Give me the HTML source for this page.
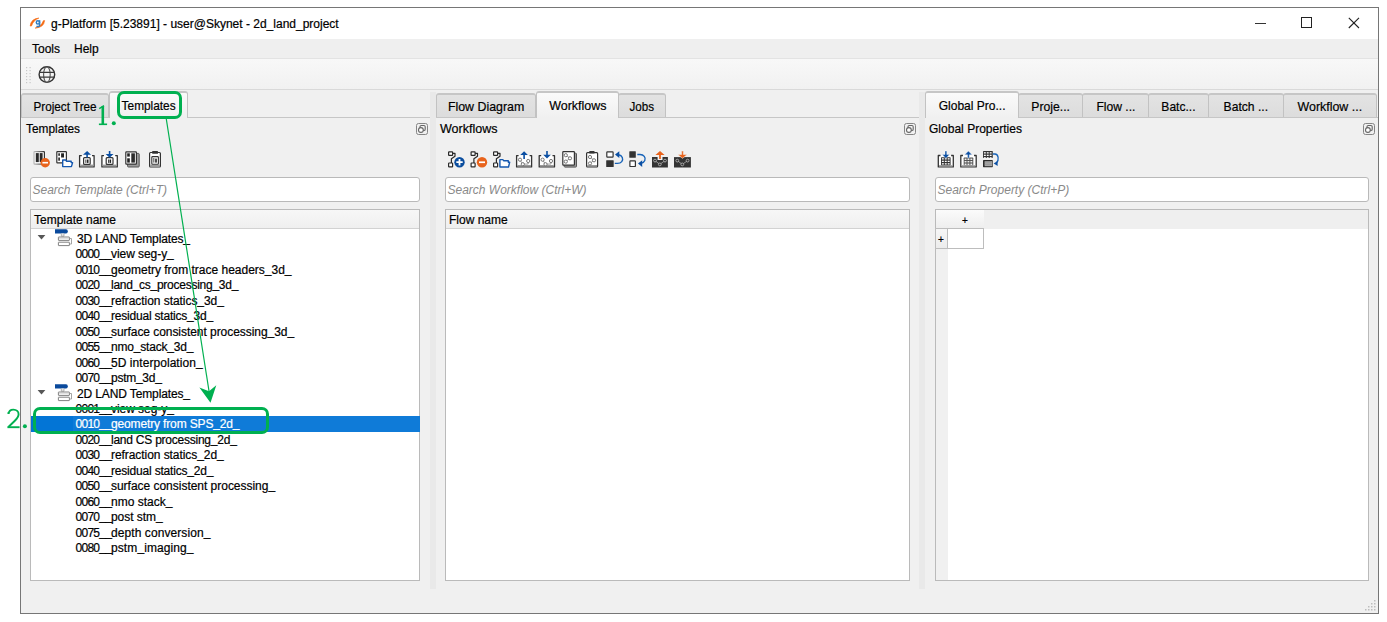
<!DOCTYPE html>
<html><head><meta charset="utf-8">
<style>
html,body{margin:0;padding:0;background:#fff;width:1387px;height:622px;overflow:hidden;}
*{box-sizing:border-box;}
body{font-family:"Liberation Sans",sans-serif;font-size:12px;color:#000;position:relative;-webkit-text-stroke:0.2px currentColor;}
.a{position:absolute;}
.t{position:absolute;white-space:nowrap;line-height:14px;}
#win{left:20px;top:7px;width:1359px;height:607px;border:1px solid #767676;background:#f0f0f0;}
#title{left:21px;top:8px;width:1357px;height:31px;background:#fff;}
#menu{left:21px;top:39px;width:1357px;height:20px;background:#efefef;border-bottom:1px solid #e3e3e3;}
#tool{left:21px;top:59px;width:1357px;height:31px;background:linear-gradient(#f8f8f8,#f1f1f1);border-bottom:1px solid #d9d9d9;}
.tab{position:absolute;top:93px;height:25px;border:1px solid #c2c2c2;border-top:2px solid #c6c6c6;border-bottom:none;border-radius:3px 3px 0 0;background:linear-gradient(#e3e3e3,#dcdcdc);text-align:center;line-height:23px;font-size:13px;}
.tl{display:inline-block;white-space:nowrap;}
.tab.sel{top:91px;height:27px;background:linear-gradient(#fafafa,#f0f0f0);border-color:#c2c2c2;border-top-color:#c6c6c6;line-height:25px;z-index:2;}
.tbline{position:absolute;top:117px;height:1px;background:#c6c6c6;z-index:1;}
.split{position:absolute;top:92px;height:497px;width:6px;background:#e9e9e9;}
.float{position:absolute;width:12px;height:12px;}
.search{position:absolute;height:25px;background:#fff;border:1px solid #b9b9b9;border-radius:3px;}
.search span{position:absolute;left:1.5px;top:5px;font-style:italic;color:#8a8a8a;-webkit-text-stroke:0;white-space:nowrap;line-height:14px;}
.tree{position:absolute;background:#fff;border:1px solid #bababa;}
.hdr{position:absolute;left:0;top:0;right:0;height:19px;background:linear-gradient(#f7f7f7,#efefef);border-bottom:1px solid #d2d2d2;}
.u{position:relative;top:-1px;}
.row{position:absolute;left:75px;white-space:nowrap;line-height:15px;}
</style></head><body>
<div id="win" class="a"></div>
<div id="title" class="a"></div>
<div class="t" style="left:51px;top:17px;">g-Platform [5.23891] - user@Skynet - 2d_land_project</div>
<div id="menu" class="a"></div>
<div class="t" style="left:32px;top:42px;">Tools</div>
<div class="t" style="left:74px;top:42px;">Help</div>
<div id="tool" class="a"></div>

<!-- left dock -->
<div class="tbline" style="left:21px;width:409px;"></div>
<div class="tab" style="left:21px;width:88px;"><span class="tl" style="transform:scaleX(0.901)">Project Tree</span></div>
<div class="tab sel" style="left:109px;width:79px;"><span class="tl" style="transform:scaleX(0.912)">Templates</span></div>
<div class="t" style="left:25.5px;top:121.5px;font-size:13px;transform:scaleX(0.912);transform-origin:0 0;">Templates</div>
<div class="float" style="left:417px;top:123px;"><svg width="12" height="12" viewBox="0 0 12 12" style="position:absolute;left:-1px;top:0px"><rect x="0.5" y="0.5" width="11" height="11" rx="2" fill="#f0f0f0" stroke="#858585"/><rect x="4" y="2.5" width="5.2" height="5" rx="1.3" fill="none" stroke="#666" stroke-width="1.1"/><circle cx="4.9" cy="7" r="2.4" fill="#fff" stroke="#666" stroke-width="1.1"/></svg></div>
<div class="search" style="left:30px;top:177px;width:390px;"><span>Search Template (Ctrl+T)</span></div>
<div class="tree" style="left:30px;top:209px;width:390px;height:372px;">
  <div class="hdr"><span class="t" style="left:3px;top:3px;">Template name</span></div>
</div>

<div class="split" style="left:430px;"></div>

<!-- middle dock -->
<div class="tbline" style="left:436px;width:483px;"></div>
<div class="tab" style="left:436px;width:100px;"><span class="tl" style="transform:scaleX(0.953)">Flow Diagram</span></div>
<div class="tab sel" style="left:536px;width:83px;"><span class="tl" style="transform:scaleX(0.961)">Workflows</span></div>
<div class="tab" style="left:618px;width:48px;"><span class="tl" style="transform:scaleX(0.893)">Jobs</span></div>
<div class="t" style="left:439.5px;top:121.5px;font-size:13px;transform:scaleX(0.964);transform-origin:0 0;">Workflows</div>
<div class="float" style="left:905px;top:123px;"><svg width="12" height="12" viewBox="0 0 12 12" style="position:absolute;left:-1px;top:0px"><rect x="0.5" y="0.5" width="11" height="11" rx="2" fill="#f0f0f0" stroke="#858585"/><rect x="4" y="2.5" width="5.2" height="5" rx="1.3" fill="none" stroke="#666" stroke-width="1.1"/><circle cx="4.9" cy="7" r="2.4" fill="#fff" stroke="#666" stroke-width="1.1"/></svg></div>
<div class="search" style="left:445px;top:177px;width:465px;"><span>Search Workflow (Ctrl+W)</span></div>
<div class="tree" style="left:445px;top:209px;width:465px;height:372px;">
  <div class="hdr"><span class="t" style="left:3px;top:3px;">Flow name</span></div>
</div>

<div class="split" style="left:919px;"></div>

<!-- right dock -->
<div class="tbline" style="left:925px;width:453px;"></div>
<div class="tab sel" style="left:925px;width:94px;"><span class="tl" style="transform:scaleX(0.924)">Global Pro...</span></div>
<div class="tab" style="left:1018px;width:65px;"><span class="tl" style="transform:scaleX(0.938)">Proje...</span></div>
<div class="tab" style="left:1082px;width:67px;"><span class="tl" style="transform:scaleX(0.93)">Flow ...</span></div>
<div class="tab" style="left:1148px;width:61px;"><span class="tl" style="transform:scaleX(0.926)">Batc...</span></div>
<div class="tab" style="left:1208px;width:76px;"><span class="tl" style="transform:scaleX(0.933)">Batch ...</span></div>
<div class="tab" style="left:1283px;width:94px;"><span class="tl" style="transform:scaleX(0.955)">Workflow ...</span></div>
<div class="t" style="left:929px;top:121.5px;font-size:13px;transform:scaleX(0.926);transform-origin:0 0;">Global Properties</div>
<div class="float" style="left:1364px;top:123px;"><svg width="12" height="12" viewBox="0 0 12 12" style="position:absolute;left:-1px;top:0px"><rect x="0.5" y="0.5" width="11" height="11" rx="2" fill="#f0f0f0" stroke="#858585"/><rect x="4" y="2.5" width="5.2" height="5" rx="1.3" fill="none" stroke="#666" stroke-width="1.1"/><circle cx="4.9" cy="7" r="2.4" fill="#fff" stroke="#666" stroke-width="1.1"/></svg></div>
<div class="search" style="left:935px;top:177px;width:434px;"><span>Search Property (Ctrl+P)</span></div>
<div class="tree" style="left:935px;top:209px;width:434px;height:372px;">
</div>
<div class="a" style="left:936px;top:210px;width:432px;height:19px;background:#efefef"></div>
<div class="a" style="left:936px;top:210px;width:48px;height:19px;background:linear-gradient(#fbfbfb,#ededed)"></div>
<div class="a" style="left:936px;top:229px;width:12px;height:351px;background:#f0f0f0"></div>
<div class="a" style="left:935px;top:228px;width:13px;height:21px;border:1px solid #bdbdbd;background:linear-gradient(#f6f6f6,#ececec)"></div>
<div class="a" style="left:947px;top:228px;width:37px;height:21px;border:1px solid #bdbdbd;background:#fff"></div>
<div class="t" style="left:962px;top:214px;font-size:10px;">+</div>
<div class="t" style="left:938px;top:233px;font-size:10px;">+</div>


<!-- title icon -->
<svg class="a" style="left:26px;top:14.5px" width="22" height="18" viewBox="0 0 22 18">
 <path d="M4.2 11 Q5 3.8 12.8 3.1 Q7.6 5 5.4 11 Z" fill="#f56a12" stroke="#f56a12" stroke-width="0.7" stroke-linejoin="round"/>
 <path d="M18.6 5.6 Q17.8 12.6 9.2 13.1 Q15.4 11.4 17.4 5.7 Z" fill="#f56a12" stroke="#f56a12" stroke-width="0.7" stroke-linejoin="round"/>
 <circle cx="11.9" cy="7.4" r="1.6" fill="none" stroke="#2f7dc2" stroke-width="1.5"/>
 <path d="M13.6 5.3 V10.3 Q13.6 11.6 12 11.6 H10.4" fill="none" stroke="#2f7dc2" stroke-width="1.5"/>
</svg>
<!-- title buttons -->
<div class="a" style="left:1255px;top:22.5px;width:11px;height:1.4px;background:#333"></div>
<div class="a" style="left:1301px;top:17px;width:11px;height:11px;border:1px solid #222"></div>
<svg class="a" style="left:1348px;top:17px" width="12" height="12" viewBox="0 0 12 12"><path d="M0.8 0.8 L11 11 M11 0.8 L0.8 11" stroke="#222" stroke-width="1.1"/></svg>
<!-- toolbar grip & globe -->
<svg class="a" style="left:25px;top:66px" width="8" height="18" viewBox="0 0 8 18">
 <g fill="#c8c8c8"><rect x="1" y="1" width="1.2" height="1.2"/><rect x="4.5" y="1" width="1.2" height="1.2"/>
 <rect x="1" y="4" width="1.2" height="1.2"/><rect x="4.5" y="4" width="1.2" height="1.2"/>
 <rect x="1" y="7" width="1.2" height="1.2"/><rect x="4.5" y="7" width="1.2" height="1.2"/>
 <rect x="1" y="10" width="1.2" height="1.2"/><rect x="4.5" y="10" width="1.2" height="1.2"/>
 <rect x="1" y="13" width="1.2" height="1.2"/><rect x="4.5" y="13" width="1.2" height="1.2"/>
 <rect x="1" y="16" width="1.2" height="1.2"/><rect x="4.5" y="16" width="1.2" height="1.2"/></g>
</svg>
<svg class="a" style="left:37px;top:65px" width="20" height="20" viewBox="0 0 20 20">
 <circle cx="9.9" cy="9.6" r="7.8" stroke="#333" stroke-width="1.4" fill="none"/>
 <ellipse cx="9.9" cy="9.6" rx="3.3" ry="7.8" stroke="#555" stroke-width="1.1" fill="none"/>
 <path d="M2.3 7.4 H17.5 M2.3 12.2 H17.5" stroke="#3a3a3a" stroke-width="1.2"/>
</svg>
<svg width="0" height="0" style="position:absolute">
 <defs>
  <symbol id="io" viewBox="0 0 6 6"><rect x="0.5" y="0.5" width="5" height="5" fill="#fff" stroke="#333" stroke-width="1"/><rect x="1.7" y="2.2" width="1" height="2.5" fill="#333"/><rect x="3.3" y="2.2" width="1.2" height="2.5" fill="#333"/></symbol>
  <symbol id="tray" viewBox="0 0 17 13"><path d="M2.5 1 H1 V12 H16 V1 H14.5" fill="none" stroke="#3c3c3c" stroke-width="1.3"/><rect x="1" y="10.6" width="15" height="1.6" fill="#777"/></symbol>
  <symbol id="flow" viewBox="0 0 12 17"><g fill="#fff" stroke="#333" stroke-width="1.3"><rect x="0.8" y="0.8" width="4.8" height="4.2"/><rect x="0.8" y="11.5" width="4.8" height="4.8"/></g><path d="M5.6 3 H7.5 V6.5 L3.2 11.5" fill="none" stroke="#333" stroke-width="1.1"/></symbol>
  <symbol id="graph" viewBox="0 0 10 10"><g fill="#fff" stroke="#555" stroke-width="0.9"><circle cx="2.3" cy="2.5" r="1.7"/><circle cx="7.5" cy="5" r="1.7"/><circle cx="2.3" cy="7.6" r="1.7"/></g></symbol>
  <symbol id="grid" viewBox="0 0 10 7"><rect x="0" y="0" width="10" height="7" rx="0.6" fill="#333"/><g fill="#fff"><rect x="1" y="1" width="2.2" height="1.2"/><rect x="4" y="1" width="2.2" height="1.2"/><rect x="7" y="1" width="2.2" height="1.2"/><rect x="1" y="3" width="2.2" height="1.2"/><rect x="4" y="3" width="2.2" height="1.2"/><rect x="7" y="3" width="2.2" height="1.2"/><rect x="1" y="5" width="2.2" height="1.2"/><rect x="4" y="5" width="2.2" height="1.2"/><rect x="7" y="5" width="2.2" height="1.2"/></g></symbol>
 </defs>
</svg>
<!-- LEFT panel icons -->
<svg class="a" style="left:0;top:0" width="200" height="175" viewBox="0 0 200 175">
 <defs><linearGradient id="lg1" x1="0" x2="1"><stop offset="0" stop-color="#bbb"/><stop offset="1" stop-color="#333"/></linearGradient></defs>
 <!-- 1 -->
 <rect x="34" y="151.6" width="10.4" height="12.5" fill="#fff" stroke="url(#lg1)" stroke-width="1.2" rx="0.6"/>
 <rect x="35.8" y="153.1" width="3" height="9" fill="#2a2a2a"/><rect x="39.7" y="153.1" width="2.9" height="9" fill="#2a2a2a"/>
 <circle cx="45.2" cy="162.7" r="4.7" fill="#e8631c"/><rect x="42.4" y="161.9" width="5.6" height="1.6" fill="#fff"/>
 <!-- 2 -->
 <rect x="56.8" y="151.6" width="9.6" height="11.3" fill="#fff" stroke="#333" stroke-width="1.2" rx="0.6"/>
 <rect x="58.3" y="153.3" width="1.6" height="2.5" fill="#222"/><rect x="58.3" y="157.5" width="1.6" height="3.2" fill="#222"/><rect x="61.1" y="153.3" width="2.9" height="4.2" fill="#222"/>
 <path d="M62.7 166.6 V160 H65.6 L66.6 161.2 H71.2 V162.6 H72.6 L71.4 166.6 Z" fill="#fff" stroke="#1558b0" stroke-width="1.4" stroke-linejoin="round"/>
 <!-- 3 export -->
 <rect x="79.6" y="155.5" width="14.5" height="11.8" fill="#fff"/>
 <path d="M81.8 155.6 H79.6 V166.9 H94.1 V155.6 H92" fill="none" stroke="#333" stroke-width="1.3" stroke-linejoin="round"/>
 <rect x="80.3" y="164.6" width="13.2" height="1.8" fill="#9a9a9a"/>
 <rect x="83.6" y="157.7" width="6.6" height="6.6" rx="0.9" fill="#fff" stroke="#333" stroke-width="1.2"/>
 <rect x="85.4" y="159.5" width="0.9" height="3.4" fill="#333"/><rect x="86.9" y="159.5" width="1.6" height="3.4" fill="#222"/>
 <path d="M87.1 151 L83 154.8 H86.3 V157.6 H87.9 V154.8 H91 Z" fill="#0b4fa3"/>
 <!-- 4 import -->
 <rect x="101.9" y="155.5" width="15.4" height="11.8" fill="#fff"/>
 <path d="M104 155.6 H101.9 V166.9 H117.3 V155.6 H115.2" fill="none" stroke="#333" stroke-width="1.3" stroke-linejoin="round"/>
 <rect x="102.6" y="164.6" width="14" height="1.8" fill="#9a9a9a"/>
 <rect x="106.2" y="157.7" width="6.8" height="6.6" rx="0.9" fill="#fff" stroke="#333" stroke-width="1.2"/>
 <rect x="108" y="159.5" width="0.9" height="3.4" fill="#333"/><rect x="109.5" y="159.5" width="1.6" height="3.4" fill="#222"/>
 <path d="M109.6 157.8 L105.7 154 H108.8 V151 H110.4 V154 H113.5 Z" fill="#0b4fa3"/>
 <!-- 5 copy -->
 <rect x="127.6" y="153.4" width="11.6" height="13.6" rx="0.8" fill="#9c9c9c" stroke="#555" stroke-width="1"/>
 <rect x="125.8" y="151.8" width="10.6" height="12.3" rx="0.6" fill="#fff" stroke="#333" stroke-width="1.2"/>
 <rect x="127.2" y="153.3" width="2.6" height="3.3" fill="#222"/><rect x="127.2" y="158.3" width="2.6" height="4.3" fill="#222"/><rect x="131.3" y="153.3" width="3.6" height="9.3" fill="#2b2b2b"/>
 <!-- 6 clipboard -->
 <rect x="149.6" y="152.5" width="10.8" height="14.5" rx="0.9" fill="#fff" stroke="#333" stroke-width="1.2"/>
 <rect x="150.2" y="164.6" width="9.6" height="2" fill="#9a9a9a"/>
 <rect x="152.2" y="151" width="5.8" height="2.8" rx="0.5" fill="#333"/>
 <rect x="151.8" y="156.6" width="6.6" height="7.6" rx="0.8" fill="#fff" stroke="#333" stroke-width="1.1"/>
 <rect x="153.4" y="158" width="0.9" height="4.6" fill="#333"/><rect x="155.2" y="158.6" width="1.6" height="4" fill="#222"/>
</svg>
<!-- MIDDLE panel icons -->
<svg class="a" style="left:0;top:0" width="700" height="175" viewBox="0 0 700 175">
 <!-- M1 -->
 <g fill="#fff" stroke="#2a2a2a" stroke-width="1.2"><rect x="448.6" y="151.8" width="4" height="3.6" rx="0.5"/><rect x="448.6" y="163" width="4" height="3.9" rx="0.5"/></g>
 <path d="M452.6 153.4 H455 V156.3 L451.4 158.7 V163" fill="none" stroke="#2a2a2a" stroke-width="1.2" stroke-linejoin="round"/>
 <circle cx="459.5" cy="162.2" r="5.2" fill="#0a4d9e"/><path d="M459.5 159 V165.4 M456.3 162.2 H462.7" stroke="#fff" stroke-width="1.8"/>
 <!-- M2 -->
 <g fill="#fff" stroke="#2a2a2a" stroke-width="1.2"><rect x="471.1" y="151.8" width="4" height="3.6" rx="0.5"/><rect x="471.1" y="163" width="4" height="3.9" rx="0.5"/></g>
 <path d="M475.1 153.4 H477.5 V156.3 L473.9 158.7 V163" fill="none" stroke="#2a2a2a" stroke-width="1.2" stroke-linejoin="round"/>
 <circle cx="482" cy="162.2" r="5.2" fill="#e8631c"/><rect x="479" y="161.4" width="6" height="1.7" fill="#fff"/>
 <!-- M3 -->
 <g fill="#fff" stroke="#2a2a2a" stroke-width="1.2"><rect x="493.6" y="151.8" width="4" height="3.6" rx="0.5"/><rect x="493.6" y="163" width="4" height="3.9" rx="0.5"/></g>
 <path d="M497.6 153.4 H500 V156.3 L496.4 158.7 V163" fill="none" stroke="#2a2a2a" stroke-width="1.2" stroke-linejoin="round"/>
 <path d="M499.9 167 V159.6 H502.8 L503.8 160.8 H508.3 V162.2 H509.7 L508.5 167 Z" fill="#fff" stroke="#1558b0" stroke-width="1.4" stroke-linejoin="round"/>
 <!-- M4 -->
 <rect x="516.6" y="155.5" width="15" height="11.8" fill="#fff"/>
 <path d="M518.6 155.6 H516.6 V166.9 H531.6 V155.6 H529.6" fill="none" stroke="#333" stroke-width="1.3" stroke-linejoin="round"/>
 <rect x="517.3" y="165" width="13.6" height="1.5" fill="#999"/>
 <path d="M520 160 L522.8 164.2 L528.2 164 V161" fill="none" stroke="#888" stroke-width="0.8"/>
 <g fill="#fff" stroke="#6a6a6a" stroke-width="0.9"><circle cx="520" cy="159.7" r="1.6"/><circle cx="522.8" cy="164.2" r="1.6"/><circle cx="528.2" cy="161" r="1.6"/></g>
 <path d="M524.1 151.2 L520.3 155 H523.3 V159.1 H524.9 V155 H527.9 Z" fill="#0b4fa3"/>
 <!-- M5 -->
 <rect x="539.2" y="155.5" width="15.3" height="11.8" fill="#fff"/>
 <path d="M541.2 155.6 H539.2 V166.9 H554.5 V155.6 H552.5" fill="none" stroke="#333" stroke-width="1.3" stroke-linejoin="round"/>
 <rect x="539.9" y="165" width="13.9" height="1.5" fill="#999"/>
 <path d="M542.6 160 L545.5 164.2 L551 164 V161" fill="none" stroke="#888" stroke-width="0.8"/>
 <g fill="#fff" stroke="#6a6a6a" stroke-width="0.9"><circle cx="542.6" cy="159.7" r="1.6"/><circle cx="545.5" cy="164.2" r="1.6"/><circle cx="551" cy="161" r="1.6"/></g>
 <path d="M547 158.6 L543.2 154.8 H546.2 V151 H547.8 V154.8 H550.8 Z" fill="#0b4fa3"/>
 <!-- M6 -->
 <rect x="564.2" y="153.2" width="12.3" height="13.9" rx="0.8" fill="#9c9c9c" stroke="#555" stroke-width="1"/>
 <rect x="562.8" y="151.6" width="11.6" height="13.6" rx="0.6" fill="#fff" stroke="#333" stroke-width="1.2"/>
 <path d="M565.8 155 L570 158.3 L565.8 161.6" fill="none" stroke="#888" stroke-width="0.8"/>
 <g fill="#fff" stroke="#6a6a6a" stroke-width="0.9"><circle cx="565.8" cy="155.2" r="1.6"/><circle cx="570" cy="158.3" r="1.6"/><circle cx="565.8" cy="161.6" r="1.6"/></g>
 <!-- M7 -->
 <rect x="586.6" y="152.6" width="11" height="14.3" rx="0.9" fill="#fff" stroke="#333" stroke-width="1.2"/>
 <rect x="587.2" y="165" width="9.8" height="1.6" fill="#9a9a9a"/>
 <rect x="589.3" y="151" width="5.2" height="2.6" rx="0.5" fill="#333"/>
 <path d="M590 157 L594 160.3 L590 163.4" fill="none" stroke="#888" stroke-width="0.8"/>
 <g fill="#fff" stroke="#6a6a6a" stroke-width="0.9"><circle cx="590" cy="157" r="1.6"/><circle cx="594" cy="160.3" r="1.6"/><circle cx="590" cy="163.4" r="1.6"/></g>
 <!-- M8 -->
 <rect x="606.8" y="151.8" width="6.3" height="5.4" rx="0.6" fill="#fff" stroke="#333" stroke-width="1.2"/>
 <rect x="606.2" y="160.3" width="7.5" height="6.8" rx="0.5" fill="#333"/>
 <path d="M614.8 163.4 H617.5 C621.3 163.4 623.5 160.5 622.3 157.5 C621.6 155.8 620.3 155 618.5 154.7" fill="none" stroke="#1763b8" stroke-width="1.4"/>
 <path d="M615 154.5 L619.3 151.2 L619.3 157.9 Z" fill="#0b4fa3"/>
 <!-- M9 -->
 <rect x="629.3" y="151.2" width="6.5" height="6.5" rx="0.5" fill="#333"/>
 <rect x="629.9" y="160.9" width="5.5" height="5.6" rx="0.6" fill="#fff" stroke="#333" stroke-width="1.2"/>
 <path d="M637.3 154.5 H640 C643.8 154.5 646 157.4 644.8 160.4 C644.1 162.1 642.8 162.9 641 163.2" fill="none" stroke="#1763b8" stroke-width="1.4"/>
 <path d="M638 163.6 L642.2 160.3 L642.2 167 Z" fill="#0b4fa3"/>
 <!-- M10 -->
 <path d="M652 157.1 H657.6 V160 H662.5 V157.1 H667.9 V167.5 H652 Z" fill="#333"/>
 <path d="M655 160.6 L659.8 164.4 L665 160.6" fill="none" stroke="#aaa" stroke-width="0.8"/>
 <g fill="#333" stroke="#bbb" stroke-width="0.8"><circle cx="655" cy="160.6" r="1.4"/><circle cx="659.8" cy="164.4" r="1.4"/><circle cx="665" cy="160.6" r="1.4"/></g>
 <path d="M660 150.9 L655.4 155.1 H659.1 V159 H660.9 V155.1 H664.6 Z" fill="#e8631c"/>
 <!-- M11 -->
 <rect x="674" y="157.1" width="16.9" height="10.4" fill="#333"/>
 <path d="M677.3 160.6 L682.3 164.4 L687.6 160.6" fill="none" stroke="#aaa" stroke-width="0.8"/>
 <g fill="#333" stroke="#bbb" stroke-width="0.8"><circle cx="677.3" cy="160.6" r="1.4"/><circle cx="682.3" cy="164.4" r="1.4"/><circle cx="687.6" cy="160.6" r="1.4"/></g>
 <path d="M682.5 158.4 L677.9 154.5 H681.6 V151 H683.4 V154.5 H687.1 Z" fill="#e8631c" stroke="#f0f0f0" stroke-width="0.5"/>
</svg>
<!-- RIGHT panel icons -->
<svg class="a" style="left:0;top:0" width="1010" height="175" viewBox="0 0 1010 175">
 <!-- R1 -->
 <rect x="938.3" y="155.4" width="15" height="11.8" fill="#fff"/>
 <path d="M940.5 155.5 H938.3 V166.9 H953.3 V155.5 H951.1" fill="none" stroke="#333" stroke-width="1.3" stroke-linejoin="round"/>
 <rect x="939" y="165.2" width="13.6" height="1.4" fill="#999"/>
 <rect x="941" y="157.2" width="9.6" height="8" rx="0.6" fill="#333"/>
 <rect x="941.90" y="158.20" width="1.9" height="1.3" fill="#fff"/><rect x="944.80" y="158.20" width="1.9" height="1.3" fill="#fff"/><rect x="947.70" y="158.20" width="1.9" height="1.3" fill="#fff"/><rect x="941.90" y="160.70" width="1.9" height="1.3" fill="#fff"/><rect x="944.80" y="160.70" width="1.9" height="1.3" fill="#fff"/><rect x="947.70" y="160.70" width="1.9" height="1.3" fill="#fff"/><rect x="941.90" y="163.20" width="1.9" height="1.3" fill="#fff"/><rect x="944.80" y="163.20" width="1.9" height="1.3" fill="#fff"/><rect x="947.70" y="163.20" width="1.9" height="1.3" fill="#fff"/>
 <path d="M945.9 158.4 L942.3 154.5 H945 V151 H946.8 V154.5 H949.5 Z" fill="#0b4fa3" stroke="#fff" stroke-width="0.4"/>
 <!-- R2 -->
 <rect x="960.8" y="155.4" width="15.4" height="11.8" fill="#fff"/>
 <path d="M963 155.5 H960.8 V166.9 H976.2 V155.5 H974" fill="none" stroke="#333" stroke-width="1.3" stroke-linejoin="round"/>
 <rect x="961.5" y="165.2" width="14" height="1.4" fill="#999"/>
 <rect x="963.7" y="157.6" width="9.6" height="7.6" rx="0.6" fill="#555"/>
 <rect x="964.60" y="158.60" width="1.9" height="1.3" fill="#fff"/><rect x="967.50" y="158.60" width="1.9" height="1.3" fill="#fff"/><rect x="970.40" y="158.60" width="1.9" height="1.3" fill="#fff"/><rect x="964.60" y="161.10" width="1.9" height="1.3" fill="#fff"/><rect x="967.50" y="161.10" width="1.9" height="1.3" fill="#fff"/><rect x="970.40" y="161.10" width="1.9" height="1.3" fill="#fff"/><rect x="964.60" y="163.60" width="1.9" height="1.3" fill="#fff"/><rect x="967.50" y="163.60" width="1.9" height="1.3" fill="#fff"/><rect x="970.40" y="163.60" width="1.9" height="1.3" fill="#fff"/>
 <path d="M968.4 151 L964.7 154.8 H967.5 V158 H969.3 V154.8 H972.1 Z" fill="#0b4fa3" stroke="#fff" stroke-width="0.4"/>
 <!-- R3 -->
 <rect x="983" y="151" width="9.8" height="6.9" rx="0.6" fill="#333"/>
 <rect x="983.90" y="152.20" width="1.9" height="1.3" fill="#fff"/><rect x="986.80" y="152.20" width="1.9" height="1.3" fill="#fff"/><rect x="989.70" y="152.20" width="1.9" height="1.3" fill="#fff"/><rect x="983.90" y="154.70" width="1.9" height="1.3" fill="#fff"/><rect x="986.80" y="154.70" width="1.9" height="1.3" fill="#fff"/><rect x="989.70" y="154.70" width="1.9" height="1.3" fill="#fff"/><rect x="983.90" y="157.20" width="1.9" height="1.3" fill="#fff"/><rect x="986.80" y="157.20" width="1.9" height="1.3" fill="#fff"/><rect x="989.70" y="157.20" width="1.9" height="1.3" fill="#fff"/>
 <rect x="983" y="160.1" width="9.8" height="7.1" rx="0.6" fill="#2a2a2a"/>
 <rect x="984.6" y="161.2" width="7.6" height="5" fill="#a8a8a8"/><path d="M984.6 162.8 H992.2 M984.6 164.5 H992.2" stroke="#8a8a8a" stroke-width="0.5"/>
 <path d="M992.8 154 H995 C998.5 154 999.3 160 996.5 163" fill="none" stroke="#1763b8" stroke-width="1.3"/>
 <path d="M993.7 163.5 L997.5 161 L997.7 166 Z" fill="#0b4fa3"/>
</svg>
<!-- tree group icons & arrows -->
<svg width="0" height="0" style="position:absolute"><defs>
 <symbol id="grp" viewBox="0 0 18 18">
  <path d="M0 0.3 H11 Q12.8 0.3 12.8 2.3 Q12.8 4.5 11 4.5 H0 Z" fill="#0a4a9c"/>
  <path d="M6.3 4.5 V7.2 H9 V4.5" fill="#e8e8e8" stroke="#999" stroke-width="0.7"/>
  <g fill="#fff" stroke="#7a7a7a" stroke-width="0.95"><rect x="3.4" y="8" width="11" height="3.4" rx="0.3"/><rect x="3.4" y="13.2" width="11" height="3.4" rx="0.3"/></g><path d="M4 9.6 H13.8" stroke="#c8c8c8" stroke-width="0.6"/>
  <path d="M14.6 9.5 H16.5 V15 H14.6" fill="none" stroke="#9a9a9a" stroke-width="0.9"/>
 </symbol>
</defs></svg>
<svg class="a" style="left:55px;top:229px" width="18" height="18"><use href="#grp" width="18" height="18"/></svg>
<svg class="a" style="left:55px;top:384px" width="18" height="18"><use href="#grp" width="18" height="18"/></svg>
<svg class="a" style="left:37px;top:234px" width="9" height="6" viewBox="0 0 9 6"><path d="M0.6 1 H8.4 L4.5 5.4 Z" fill="#575757"/></svg>
<svg class="a" style="left:37px;top:389px" width="9" height="6" viewBox="0 0 9 6"><path d="M0.6 1 H8.4 L4.5 5.4 Z" fill="#575757"/></svg>
<div class="a" style="left:31px;top:416px;width:389px;height:16px;background:#0375d6"></div><div class="a" style="left:73px;top:416px;width:347px;height:16px;background:#0f7bd8"></div>
<div class="t" style="left:77.0px;top:231.74px;line-height:15px;letter-spacing:-0.126px;color:#000">3D LAND Templates<span class="u">_</span></div>
<div class="t" style="left:75.6px;top:247.21px;line-height:15px;color:#000"><span style="letter-spacing:-0.77px">0000<span class="u">_</span><span class="u">_</span></span><span style="position:absolute;left:35.4px;top:0;letter-spacing:-0.060px">view seg-y<span class="u">_</span></span></div>
<div class="t" style="left:75.6px;top:262.68px;line-height:15px;color:#000"><span style="letter-spacing:-0.77px">0010<span class="u">_</span><span class="u">_</span></span><span style="position:absolute;left:35.4px;top:0;letter-spacing:-0.009px">geometry from trace headers<span class="u">_</span>3d<span class="u">_</span></span></div>
<div class="t" style="left:75.6px;top:278.15px;line-height:15px;color:#000"><span style="letter-spacing:-0.77px">0020<span class="u">_</span><span class="u">_</span></span><span style="position:absolute;left:35.4px;top:0;letter-spacing:-0.262px">land<span class="u">_</span>cs<span class="u">_</span>processing<span class="u">_</span>3d<span class="u">_</span></span></div>
<div class="t" style="left:75.6px;top:293.62px;line-height:15px;color:#000"><span style="letter-spacing:-0.77px">0030<span class="u">_</span><span class="u">_</span></span><span style="position:absolute;left:35.4px;top:0;letter-spacing:-0.057px">refraction statics<span class="u">_</span>3d<span class="u">_</span></span></div>
<div class="t" style="left:75.6px;top:309.09px;line-height:15px;color:#000"><span style="letter-spacing:-0.77px">0040<span class="u">_</span><span class="u">_</span></span><span style="position:absolute;left:35.4px;top:0;letter-spacing:-0.203px">residual statics<span class="u">_</span>3d<span class="u">_</span></span></div>
<div class="t" style="left:75.6px;top:324.56px;line-height:15px;color:#000"><span style="letter-spacing:-0.77px">0050<span class="u">_</span><span class="u">_</span></span><span style="position:absolute;left:35.4px;top:0;letter-spacing:-0.054px">surface consistent processing<span class="u">_</span>3d<span class="u">_</span></span></div>
<div class="t" style="left:75.6px;top:340.03px;line-height:15px;color:#000"><span style="letter-spacing:-0.77px">0055<span class="u">_</span><span class="u">_</span></span><span style="position:absolute;left:35.4px;top:0;letter-spacing:-0.195px">nmo<span class="u">_</span>stack<span class="u">_</span>3d<span class="u">_</span></span></div>
<div class="t" style="left:75.6px;top:355.50px;line-height:15px;color:#000"><span style="letter-spacing:-0.77px">0060<span class="u">_</span><span class="u">_</span></span><span style="position:absolute;left:35.4px;top:0;letter-spacing:0.057px">5D interpolation<span class="u">_</span></span></div>
<div class="t" style="left:75.6px;top:370.97px;line-height:15px;color:#000"><span style="letter-spacing:-0.77px">0070<span class="u">_</span><span class="u">_</span></span><span style="position:absolute;left:35.4px;top:0;letter-spacing:-0.263px">pstm<span class="u">_</span>3d<span class="u">_</span></span></div>
<div class="t" style="left:77.0px;top:387.2px;line-height:15px;letter-spacing:-0.126px;color:#000">2D LAND Templates<span class="u">_</span></div>
<div class="t" style="left:75.6px;top:401.91px;line-height:15px;color:#000"><span style="letter-spacing:-0.77px">0001<span class="u">_</span><span class="u">_</span></span><span style="position:absolute;left:35.4px;top:0;letter-spacing:-0.042px">view seg-y<span class="u">_</span></span></div>
<div class="t" style="left:75.6px;top:417.38px;line-height:15px;color:#fff"><span style="letter-spacing:-0.77px">0010<span class="u">_</span><span class="u">_</span></span><span style="position:absolute;left:35.4px;top:0;letter-spacing:-0.143px">geometry from SPS<span class="u">_</span>2d<span class="u">_</span></span></div>
<div class="t" style="left:75.6px;top:432.85px;line-height:15px;color:#000"><span style="letter-spacing:-0.77px">0020<span class="u">_</span><span class="u">_</span></span><span style="position:absolute;left:35.4px;top:0;letter-spacing:-0.235px">land CS processing<span class="u">_</span>2d<span class="u">_</span></span></div>
<div class="t" style="left:75.6px;top:448.32px;line-height:15px;color:#000"><span style="letter-spacing:-0.77px">0030<span class="u">_</span><span class="u">_</span></span><span style="position:absolute;left:35.4px;top:0;letter-spacing:-0.062px">refraction statics<span class="u">_</span>2d<span class="u">_</span></span></div>
<div class="t" style="left:75.6px;top:463.79px;line-height:15px;color:#000"><span style="letter-spacing:-0.77px">0040<span class="u">_</span><span class="u">_</span></span><span style="position:absolute;left:35.4px;top:0;letter-spacing:-0.188px">residual statics<span class="u">_</span>2d<span class="u">_</span></span></div>
<div class="t" style="left:75.6px;top:479.26px;line-height:15px;color:#000"><span style="letter-spacing:-0.77px">0050<span class="u">_</span><span class="u">_</span></span><span style="position:absolute;left:35.4px;top:0;letter-spacing:-0.022px">surface consistent processing<span class="u">_</span></span></div>
<div class="t" style="left:75.6px;top:494.73px;line-height:15px;color:#000"><span style="letter-spacing:-0.77px">0060<span class="u">_</span><span class="u">_</span></span><span style="position:absolute;left:35.4px;top:0;letter-spacing:0.014px">nmo stack<span class="u">_</span></span></div>
<div class="t" style="left:75.6px;top:510.20px;line-height:15px;color:#000"><span style="letter-spacing:-0.77px">0070<span class="u">_</span><span class="u">_</span></span><span style="position:absolute;left:35.4px;top:0;letter-spacing:-0.037px">post stm<span class="u">_</span></span></div>
<div class="t" style="left:75.6px;top:525.67px;line-height:15px;color:#000"><span style="letter-spacing:-0.77px">0075<span class="u">_</span><span class="u">_</span></span><span style="position:absolute;left:35.4px;top:0;letter-spacing:0.084px">depth conversion<span class="u">_</span></span></div>
<div class="t" style="left:75.6px;top:541.14px;line-height:15px;color:#000"><span style="letter-spacing:-0.77px">0080<span class="u">_</span><span class="u">_</span></span><span style="position:absolute;left:35.4px;top:0;letter-spacing:0.094px">pstm<span class="u">_</span>imaging<span class="u">_</span></span></div>
<svg class="a" style="left:1360px;top:596px" width="18" height="17" viewBox="1360 596 18 17"><g fill="#bdbdbd">
<rect x="1374" y="600" width="1.5" height="1.5"/>
<rect x="1371" y="603" width="1.5" height="1.5"/><rect x="1374" y="603" width="1.5" height="1.5"/>
<rect x="1368" y="606" width="1.5" height="1.5"/><rect x="1371" y="606" width="1.5" height="1.5"/><rect x="1374" y="606" width="1.5" height="1.5"/>
<rect x="1365" y="609" width="1.5" height="1.5"/><rect x="1368" y="609" width="1.5" height="1.5"/><rect x="1371" y="609" width="1.5" height="1.5"/><rect x="1374" y="609" width="1.5" height="1.5"/>
</g></svg>
<!-- annotations -->
<div class="a" style="left:117px;top:91px;width:65px;height:28px;border:3.2px solid #00b050;border-radius:7px;z-index:5"></div>
<div class="a" style="left:33px;top:407px;width:236px;height:27px;border:3.2px solid #00b050;border-radius:7px;z-index:5"></div>
<svg class="a" style="left:0;top:0;z-index:5" width="130" height="130" viewBox="0 0 130 130">
 <path d="M102.8 106.2 V124" stroke="#00b050" stroke-width="2.6" fill="none"/>
 <path d="M104 105.6 L99.2 108.6" stroke="#00b050" stroke-width="1.4" fill="none"/>
 <path d="M98.9 124.3 H107.1" stroke="#00b050" stroke-width="1.6" fill="none"/>
 <circle cx="113.8" cy="123.3" r="2" fill="#00b050"/>
</svg>
<svg class="a" style="left:0;top:400px;z-index:5" width="40" height="40" viewBox="0 400 40 40">
 <path d="M8.6 414 C8.8 410.8 11 409.6 13.4 409.6 C16.6 409.6 18.6 411.6 18.6 414.2 C18.6 416.8 17 418.6 14.6 421 L8.4 427" stroke="#00b050" stroke-width="1.9" fill="none"/>
 <path d="M7.4 427.2 H19.6" stroke="#00b050" stroke-width="1.9" fill="none"/>
 <path d="M8.3 413.8 L8.3 412.2" stroke="#00b050" stroke-width="1.6"/>
 <circle cx="24.9" cy="426.2" r="2" fill="#00b050"/>
</svg>
<svg class="a" style="left:0;top:0;z-index:6" width="1387" height="622">
 <line x1="166.3" y1="119" x2="209.3" y2="393" stroke="#00b050" stroke-width="1.2"/>
 <path d="M210.5 402.8 L199.4 387.4 L209 391.3 L216.3 385.2 Z" fill="#00b050"/>
</svg>
</body></html>
